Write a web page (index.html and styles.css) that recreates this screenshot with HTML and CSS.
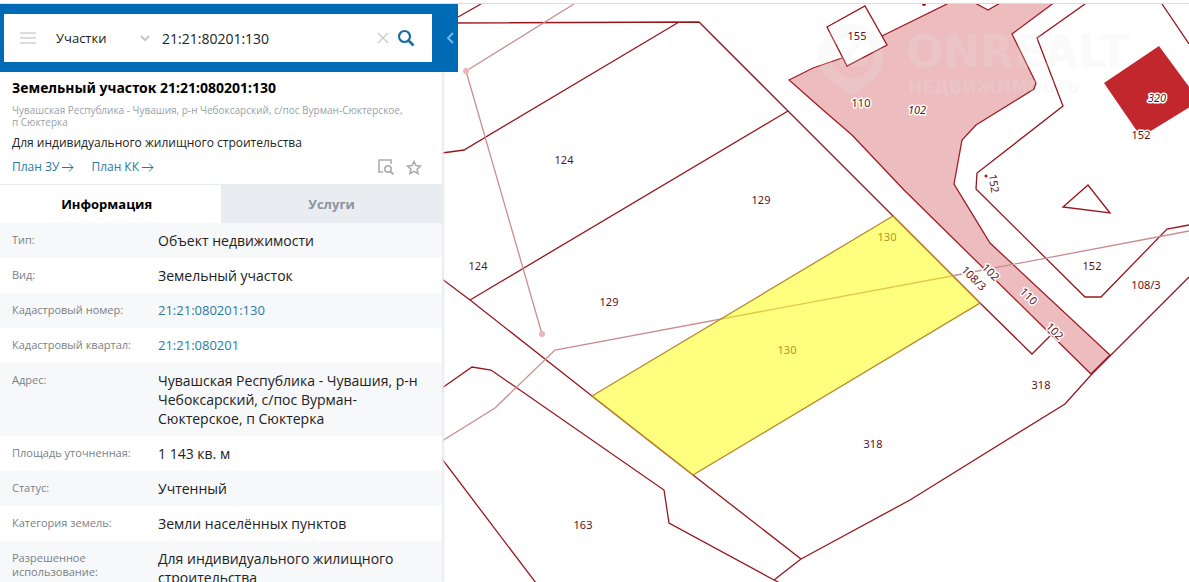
FILE: index.html
```html
<!DOCTYPE html>
<html lang="ru">
<head>
  <meta charset="UTF-8" />
  <meta name="viewport" content="width=device-width, initial-scale=1.0" />
  <title>Земельный участок 21:21:080201:130</title>
  <link rel="stylesheet" href="styles.css">
</head>
<body>
  <main class="app">
    <aside class="sidebar">
      <form class="search-bar">
        <div class="search-box">
          <button class="icon-btn menu-btn" type="button" aria-label="Меню">
            <svg width="16" height="14" viewBox="0 0 16 14"><path d="M0 2h16M0 7h16M0 12h16" stroke="#dcdcdc" stroke-width="2"/></svg>
          </button>
          <div class="type-select">
            <select aria-label="Тип объекта">
              <option>Участки</option>
              <option>ОКС</option>
            </select>
            <svg class="chevron" width="10" height="7" viewBox="0 0 10 7"><path d="M1 1l4 4 4-4" fill="none" stroke="#c4c6c8" stroke-width="2"/></svg>
          </div>
          <input class="search-input" type="text" value="21:21:80201:130" aria-label="Поиск" />
          <div class="search-actions">
            <button class="icon-btn" type="button" aria-label="Очистить">
              <svg width="12" height="12" viewBox="0 0 12 12"><path d="M1 1l10 10M11 1L1 11" stroke="#c8cacc" stroke-width="1.4"/></svg>
            </button>
            <button class="icon-btn" type="submit" aria-label="Найти">
              <svg width="18" height="18" viewBox="0 0 18 18"><circle cx="7.5" cy="7.5" r="5.5" fill="none" stroke="#1b6fa0" stroke-width="2.2"/><path d="M11.5 11.5l5 5" stroke="#1b6fa0" stroke-width="2.6"/></svg>
            </button>
          </div>
        </div>
        <button class="collapse-btn" type="button" aria-label="Свернуть">
          <svg width="8" height="12" viewBox="0 0 8 12"><path d="M7 1L2 6l5 5" fill="none" stroke="#6fb9ec" stroke-width="2"/></svg>
        </button>
      </form>

      <section class="summary">
        <h1>Земельный участок 21:21:080201:130</h1>
        <p class="address">Чувашская Республика - Чувашия, р-н Чебоксарский, с/пос Вурман-Сюктерское, п&nbsp;Сюктерка</p>
        <p class="purpose">Для индивидуального жилищного строительства</p>
        <div class="actions">
          <a href="#">План ЗУ<svg width="12" height="9" viewBox="0 0 12 9"><path d="M0 4.5h11M7 .5l4 4-4 4" fill="none" stroke="#2a7ba3"/></svg></a>
          <a href="#">План КК<svg width="12" height="9" viewBox="0 0 12 9"><path d="M0 4.5h11M7 .5l4 4-4 4" fill="none" stroke="#2a7ba3"/></svg></a>
          <button class="icon-btn preview-btn" type="button" aria-label="Показать на карте">
            <svg width="16" height="16" viewBox="0 0 16 16" fill="none" stroke="#a9adb2" stroke-width="1.6"><path d="M5 13H1V1h12v4"/><circle cx="10" cy="10" r="3.2"/><path d="M12.4 12.4l3 3" stroke-width="2"/></svg>
          </button>
          <button class="icon-btn" type="button" aria-label="В избранное">
            <svg width="16" height="15" viewBox="0 0 16 15" fill="none" stroke="#a9adb2" stroke-width="1.6"><path d="M8 1.5l1.9 4.1 4.5.5-3.3 3.1.9 4.4L8 11.4l-4 2.2.9-4.4L1.6 6.1l4.5-.5z"/></svg>
          </button>
        </div>
      </section>

      <nav class="tabs">
        <button class="tab active" type="button">Информация</button>
        <button class="tab" type="button">Услуги</button>
      </nav>

      <table class="info">
        <tr><th scope="row">Тип:</th><td>Объект недвижимости</td></tr>
        <tr><th scope="row">Вид:</th><td>Земельный участок</td></tr>
        <tr><th scope="row">Кадастровый номер:</th><td><a href="#">21:21:080201:130</a></td></tr>
        <tr><th scope="row">Кадастровый квартал:</th><td><a href="#">21:21:080201</a></td></tr>
        <tr><th scope="row">Адрес:</th><td>Чувашская Республика - Чувашия, р-н Чебоксарский, с/пос Вурман-Сюктерское, п Сюктерка</td></tr>
        <tr><th scope="row">Площадь уточненная:</th><td>1 143 кв. м</td></tr>
        <tr><th scope="row">Статус:</th><td>Учтенный</td></tr>
        <tr><th scope="row">Категория земель:</th><td>Земли населённых пунктов</td></tr>
        <tr><th scope="row">Разрешенное использование:</th><td>Для индивидуального жилищного строительства</td></tr>
      </table>
    </aside>

    <section class="map">
      <svg viewBox="442 4 747 578" preserveAspectRatio="xMinYMin slice">
        <!-- road -->
        <path class="road" d="M789 80L813 68 842 58 882 36 951 2H973L988 10 1002 2H1055L1012 34 1036 83 1034 89 976 125 962 140 954 184 990 243 1110 355 1091 374 904 190 852 135 823 110z"/>

        <!-- plots -->
        <path class="plot" d="M458 17L481 4M442 23L699 22 788 111 893 216 980 303 1032 354 1050 336M679 22L464 150 442 153M788 111L470 300M442 279L470 300 592 396 693 475 801 559 774 580M442 388L472 367 491 370 664 490 669 523 774 580 780 583M442 459L536 583M801 559L910 500 1065 404 1091 375 1189 277"/>
        <path class="plot" d="M1085 4L1037 38 1063 106 977 173 976 189 1085 297H1101L1167 229 1189 225M1162 4L1189 44M1063 207L1088 185 1110 213z"/>
        <path class="plot house" d="M827 27L865 6 887 45 847 66z"/>
        <path class="building" d="M1159 46L1104 83 1141 137 1190 107V88z"/>
        <circle class="dot" cx="986" cy="176" r="1.5"/>
        <circle class="dot" cx="924" cy="4" r="2"/>

        <!-- power line -->
        <path class="zone" d="M574 4L466 71 542 334M442 441L495 408 555 350 957 275 1189 231"/>
        <circle class="zone-dot" cx="466" cy="71" r="3"/>
        <circle class="zone-dot" cx="542" cy="334" r="3"/>

        <path class="selected" d="M893 216L980 303 693 475 592 396z"/>

        <g class="watermark">
          <path fill-rule="evenodd" d="M852 24a32 32 0 0 1 15 60L852 96 835 84a32 32 0 0 1 17-60zM852 36a21 21 0 1 0 1 0zM866 36L850 58H868V66H840V58z"/>
          <text class="brand" x="906" y="67">ONREALT</text>
          <text class="brand-sub" x="908" y="93">НЕДВИЖИМОСТЬ</text>
        </g>

        <g class="labels">
          <text x="857" y="40">155</text>
          <text x="861" y="107">110</text>
          <text class="italic" x="917" y="114">102</text>
          <text class="italic" x="1157" y="102">320</text>
          <text x="1141" y="139">152</text>
          <text transform="translate(990 184) rotate(82)">152</text>
          <text x="564" y="164">124</text>
          <text x="761" y="204">129</text>
          <text x="478" y="270">124</text>
          <text x="609" y="306">129</text>
          <text transform="translate(971 281) rotate(45)">108/3</text>
          <text transform="translate(988 275) rotate(45)">102</text>
          <text transform="translate(1026 299) rotate(45)">110</text>
          <text transform="translate(1052 334) rotate(45)">102</text>
          <text x="1092" y="270">152</text>
          <text x="1146" y="289">108/3</text>
          <text x="1041" y="389">318</text>
          <text x="873" y="448">318</text>
          <text x="583" y="529">163</text>
          <text class="on-selected" x="887" y="241">130</text>
          <text class="on-selected" x="787" y="354">130</text>
        </g>
      </svg>
    </section>
  </main>
</body>
</html>
```
FILE: styles.css
```css
* {
  box-sizing: border-box;
}
body {
  margin: 0;
  height: 100vh;
  padding-top: 3px;
  overflow: hidden;
  background: #fff;
  color: #222;
  font-family: "Open Sans", "Noto Sans", sans-serif;
}
a {
  color: #2a7ba3;
  text-decoration: none;
}
button, input, select {
  font-family: inherit;
}
.app {
  display: flex;
  height: 100%;
  border-top: 1px solid #dcdcdc;
}
.sidebar {
  position: relative;
  z-index: 1;
  flex: 0 0 442px;
  min-width: 0;
  background: #fff;
  box-shadow: 2px 0 2px #e8eaed;
}

/* search */
.search-bar {
  display: flex;
  width: 458px;
  padding: 10px 0 10px 4px;
  background: #006bb5;
}
.search-box {
  display: flex;
  flex: 1;
  align-items: center;
  height: 48px;
  padding: 0 17px 0 16px;
  gap: 12px;
  background: #fff;
}
.icon-btn {
  display: flex;
  padding: 0;
  border: none;
  background: none;
  cursor: pointer;
}
.menu-btn {
  margin-right: 8px;
}
.type-select {
  display: flex;
  align-items: center;
  width: 94px;
}
.type-select select {
  flex: 1;
  min-width: 0;
  padding: 0;
  border: none;
  background: none;
  appearance: none;
  color: #222;
  font-size: 13px;
}
.search-input {
  flex: 1;
  min-width: 0;
  padding: 0;
  border: none;
  outline: none;
  color: #222;
  font-size: 14px;
}
.search-actions {
  display: flex;
  align-items: center;
  gap: 8px;
}
.collapse-btn {
  display: flex;
  align-items: center;
  justify-content: flex-end;
  width: 26px;
  padding: 0 4px;
  border: none;
  background: none;
  cursor: pointer;
}

/* summary */
.summary {
  padding: 7px 20px 9px 12px;
}
.summary h1 {
  margin: 0;
  color: #000;
  font-family: "Noto Sans", sans-serif;
  font-size: 14px;
  line-height: 18px;
}
.address {
  margin: 7px 0 0;
  color: #9a9fa8;
  font-size: 10px;
  line-height: 12px;
}
.purpose {
  margin: 6px 0 0;
  font-size: 12px;
  line-height: 18px;
}
.actions {
  display: flex;
  align-items: center;
  gap: 12px;
  margin-top: 7px;
  font-size: 12px;
  line-height: 16px;
}
.actions a {
  display: flex;
  align-items: center;
  gap: 3px;
  margin-right: 5px;
}
.preview-btn {
  margin-left: auto;
}

/* tabs */
.tabs {
  display: flex;
  height: 39px;
  border-top: 1px solid #e9ecf1;
}
.tab {
  flex: 225;
  border: none;
  background: #e9ecf1;
  color: #8d939d;
  font-size: 13px;
  font-weight: bold;
  cursor: pointer;
}
.tab.active {
  flex: 217;
  padding-right: 14px;
  background: #fff;
  color: #000;
}

/* object info */
.info {
  width: 100%;
  border-collapse: collapse;
}
.info tr:nth-child(odd) {
  background: #f7f8fa;
}
.info th {
  width: 158px;
  padding: 10px 12px 8px;
  color: #7b7f85;
  font-size: 11px;
  font-weight: normal;
  line-height: 14px;
  text-align: left;
  vertical-align: top;
}
.info td {
  padding: 8px 20px 8px 0;
  font-size: 14px;
  line-height: 19px;
  vertical-align: top;
}
.info a {
  display: block;
  font-size: 13px;
}

/* map */
.map {
  flex: 1;
  min-width: 0;
  background: #fff;
}
.map svg {
  display: block;
  width: 100%;
  height: 100%;
}
.road {
  fill: #edbcbe;
  stroke: #a01c24;
  stroke-width: 1.3;
}
.plot {
  fill: none;
  stroke: #96161c;
  stroke-width: 1.3;
}
.house {
  fill: #fff;
}
.building {
  fill: #c1272d;
}
.dot {
  fill: #96161c;
}
.zone {
  fill: none;
  stroke: #c98d90;
  stroke-width: 1.3;
}
.zone-dot {
  fill: #eab4b8;
}
.selected {
  fill: #ffff00;
  fill-opacity: 0.5;
  stroke: #b8892a;
  stroke-width: 1.3;
}
.labels text {
  fill: #5f1216;
  stroke: #fff;
  stroke-width: 3px;
  stroke-linejoin: round;
  paint-order: stroke;
  font-family: "Noto Sans", sans-serif;
  font-size: 11px;
  text-anchor: middle;
}
.labels .italic {
  font-style: italic;
}
.labels .on-selected {
  fill: #b5912a;
  stroke: none;
}
.watermark {
  fill: #e8e8e8;
  opacity: 0.2;
  font-family: "DejaVu Sans", sans-serif;
  font-weight: bold;
}
.brand {
  font-size: 44px;
}
.brand-sub {
  font-size: 17px;
}
```
